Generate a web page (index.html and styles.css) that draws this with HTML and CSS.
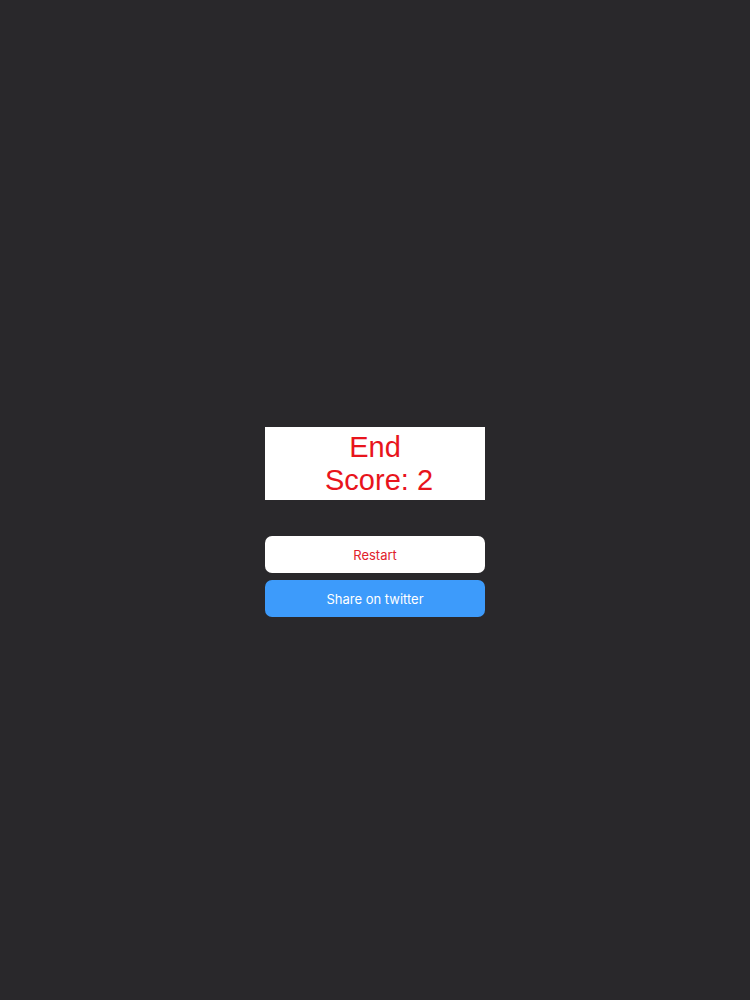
FILE: index.html
```html
<!DOCTYPE html>
<html>
<head>
<meta charset="utf-8">
<link rel="stylesheet" href="styles.css">
</head>
<body>
<main class="screen">
  <div class="panel">
    <div class="result">End
 Score: 2</div>
    <div class="actions">
      <button class="btn btn-restart">Restart</button>
      <button class="btn btn-share">Share on twitter</button>
    </div>
  </div>
</main>
</body>
</html>
```
FILE: styles.css
```css
html, body {
  margin: 0;
  padding: 0;
  background: #29282b;
}
.screen {
  width: 750px;
  height: 1000px;
  display: flex;
  justify-content: center;
  padding-top: 427px;
  box-sizing: border-box;
}
.panel {
  width: 220px;
  display: flex;
  flex-direction: column;
}
.result {
  height: 73px;
  background: #ffffff;
  color: #e8141c;
  font-family: "Liberation Sans", Arial, sans-serif;
  font-size: 29px;
  line-height: 33px;
  text-align: center;
  white-space: pre;
  display: flex;
  align-items: center;
  justify-content: center;
}
.actions {
  margin-top: 36px;
  display: flex;
  flex-direction: column;
  gap: 7px;
}
.btn {
  height: 37px;
  border: none;
  border-radius: 7px;
  font-family: Inter, "Liberation Sans", sans-serif;
  font-size: 13px;
  padding: 0;
}
.btn-restart {
  background: #ffffff;
  color: #e0222c;
}
.btn-share {
  background: #3d9bfb;
  color: #ffffff;
}
```
